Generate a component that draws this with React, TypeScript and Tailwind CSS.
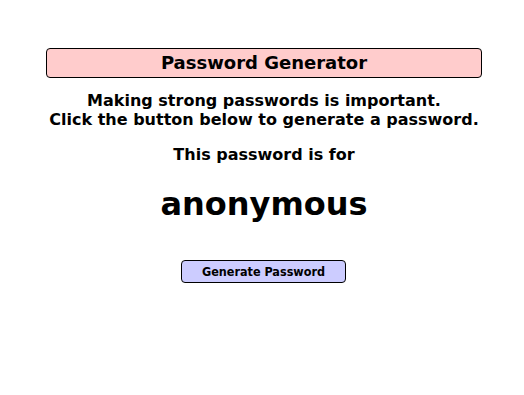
import React from "react";

export default function App() {
  return (
    <div
      className="w-[524px] h-[395px] bg-white text-black pl-[46px] pr-[42px] pt-[48px]"
      style={{ fontFamily: '"DejaVu Sans", sans-serif' }}
    >
      <div className="h-[30px] bg-[#ffcccc] border border-black rounded-[4px] flex items-center justify-center">
        <h1 className="text-[18px] font-bold leading-none">Password Generator</h1>
      </div>

      <p className="mt-[13px] text-center text-[16px] font-bold leading-[19px]">
        Making strong passwords is important.
        <br />
        Click the button below to generate a password.
      </p>

      <p className="mt-[16px] text-center text-[16px] font-bold leading-[19px]">This password is for</p>

      <p className="mt-[21px] text-center text-[32px] font-bold leading-[38px]">anonymous</p>

      <div className="mt-[37px] flex justify-center">
        <button
          className="mr-[1px] w-[165px] h-[23px] pt-[2px] bg-[#ccccff] border border-black rounded-[4px] text-[12.5px] font-bold leading-none"
          style={{ fontFamily: '"DejaVu Sans Condensed", "DejaVu Sans", sans-serif' }}
        >
          Generate Password
        </button>
      </div>
    </div>
  );
}
